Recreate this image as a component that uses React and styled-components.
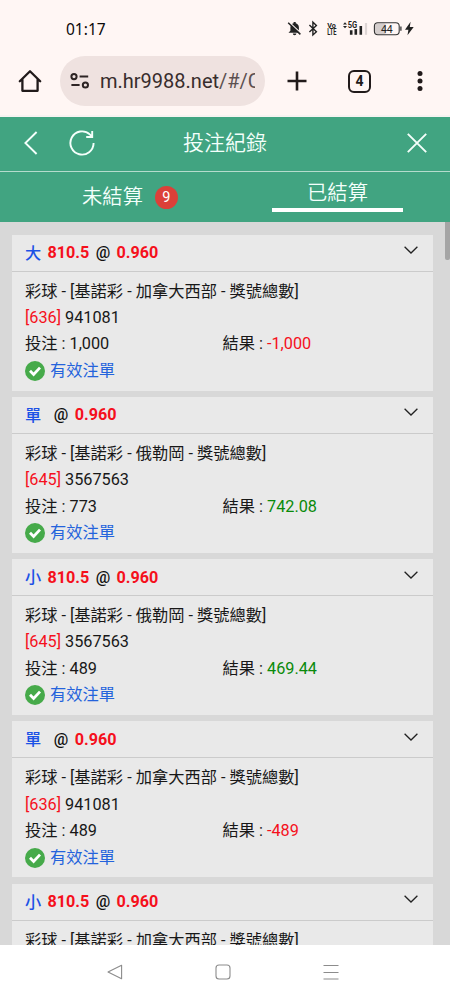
import React, { useState } from 'react';
import styled, { createGlobalStyle } from 'styled-components';

const bets = [
    { id: 1, pick: '大', line: '810.5', odds: '0.960', game: '加拿大西部', code: '636', round: '941081', stake: '1,000', result: '-1,000' },
    { id: 2, pick: '單', line: '', odds: '0.960', game: '俄勒岡', code: '645', round: '3567563', stake: '773', result: '742.08' },
    { id: 3, pick: '小', line: '810.5', odds: '0.960', game: '俄勒岡', code: '645', round: '3567563', stake: '489', result: '469.44' },
    { id: 4, pick: '單', line: '', odds: '0.960', game: '加拿大西部', code: '636', round: '941081', stake: '489', result: '-489' },
    { id: 5, pick: '小', line: '810.5', odds: '0.960', game: '加拿大西部', code: '636', round: '941081', stake: '489', result: '-489' }
];

const StatusBar = () => (
    <StatusRow>
        <Clock>01:17</Clock>
        <StatusIcons viewBox='0 0 128 18'>
            {/* muted bell */}
            <path d='M2.5 12.8h12.2l-1.8-2V7.4c0-2.2-1.4-3.7-3.2-4.1V2H7.6v1.3c-1.9.5-3.2 2-3.2 4.1v3.4zM6.8 13.6h3.6a1.8 1.6 0 0 1-3.6 0z' fill='#222' />
            <path d='M3.2 2.2l12 11.4' stroke='#fff6f4' strokeWidth='1.4' />
            <path d='M2.2 2.8l12.2 11.6' stroke='#222' strokeWidth='1.5' />
            {/* bluetooth */}
            <path d='M23.4 5l7 6.8-3.5 3.2V2.2l3.5 3.2-7 6.6' fill='none' stroke='#222' strokeWidth='1.4' />
            <IconText x='41.3' y='8.4' textLength='8.6' lengthAdjust='spacingAndGlyphs' $size={8}>Vo</IconText>
            <IconText x='41.3' y='15.4' textLength='9.2' lengthAdjust='spacingAndGlyphs' $size={8.4}>LTE</IconText>
            {/* signal */}
            <path d='M57 4.4l2-2.2 2 2.2zM57 6l2 2.2L61 6z' fill='#222' />
            <IconText x='61.8' y='8' textLength='9.4' lengthAdjust='spacingAndGlyphs' $size={8.4}>5G</IconText>
            <path d='M65.2 10.2v4.6M69.8 9v5.8M74.8 6v8.8' stroke='#222' strokeWidth='2.6' />
            <path d='M80 3v11.8' stroke='#ddd5d4' strokeWidth='2.2' />
            {/* battery */}
            <rect x='89' y='3.4' width='11' height='10.8' rx='2' fill='#d5cecd' />
            <rect x='88.4' y='2.7' width='24.8' height='12' rx='3.4' fill='none' stroke='#333' strokeWidth='1.1' />
            <path d='M114.9 6.6v4.2' stroke='#333' strokeWidth='1.3' />
            <BatteryText x='100.8' y='12.6' textAnchor='middle'>44</BatteryText>
            <path d='M124.6 1.8l-5.6 8h3.4l-.9 5.4 6.2-8.2h-3.9z' fill='#222' />
        </StatusIcons>
    </StatusRow>
);

const BrowserBar = () => (
    <BrowserRow>
        <HomeIcon viewBox='0 0 24 24'>
            <path d='M1.8 12.2L12 2.2l10.2 10M4.4 10.6v11.2h15.2V10.6' />
        </HomeIcon>
        <AddressPill>
            <SiteIcon viewBox='0 0 20 16'>
                <circle cx='4' cy='3.6' r='2.6' />
                <path d='M9.6 3.6h8.6M1.4 12h8.2' />
                <circle cx='15.4' cy='12' r='2.6' />
            </SiteIcon>
            <Address>m.hr9988.net<span>/#/Ca</span></Address>
        </AddressPill>
        <PlusIcon viewBox='0 0 20 20'>
            <path d='M10 .5v19M.5 10h19' />
        </PlusIcon>
        <TabCount>4</TabCount>
        <MenuDots viewBox='0 0 6 20'>
            <circle cx='3' cy='2.5' r='2.5' />
            <circle cx='3' cy='10' r='2.5' />
            <circle cx='3' cy='17.5' r='2.5' />
        </MenuDots>
    </BrowserRow>
);

const BetCard = ({ bet }) => {
    const [open, setOpen] = useState(true);

    return (
        <Card>
            <CardHeader onClick={() => setOpen(!open)}>
                <Pick>{bet.pick}</Pick>
                <Odds>{bet.line}</Odds>
                <At>@</At>
                <Odds>{bet.odds}</Odds>
                <Chevron viewBox='0 0 14 8'>
                    <path d='M.6 .8L7 7l6.4-6.2' />
                </Chevron>
            </CardHeader>
            {open && (
                <CardBody>
                    <Line>彩球 - [基諾彩 - {bet.game} - 獎號總數]</Line>
                    <Line><Amount $color='#f5101c'>[{bet.code}]</Amount> {bet.round}</Line>
                    <Split>
                        <Line>投注 : {bet.stake}</Line>
                        <Line>結果 : <Amount $color={bet.result.startsWith('-') ? '#f5101c' : '#0a8a0a'}>{bet.result}</Amount></Line>
                    </Split>
                    <Valid>
                        <Check viewBox='0 0 20 20'>
                            <circle cx='10' cy='10' r='10' fill='#46aa4a' />
                            <path d='M5 9.8l3.6 3.6 6.4-6.8' fill='none' stroke='#fff' strokeWidth='2.8' />
                        </Check>
                        有效注單
                    </Valid>
                </CardBody>
            )}
        </Card>
    );
};

const App = () => {
    const [tab, setTab] = useState('settled');

    return (
        <Phone>
            <GlobalStyle />
            <StatusBar />
            <BrowserBar />
            <TitleBar>
                <TitleIcon $width={14} $height={24} $left={24} viewBox='0 0 14 24'>
                    <path d='M12.6 1L1.4 12l11.2 11' />
                </TitleIcon>
                <TitleIcon $width={26} $height={26} $left={31} viewBox='0 0 26 26'>
                    <path d='M24.6 13A11.6 11.6 0 1 1 20.8 4.4L23 6.6M23.2 1v6h-6' />
                </TitleIcon>
                <Title>投注紀錄</Title>
                <TitleIcon $width={20} $height={20} $left={140} viewBox='0 0 20 20'>
                    <path d='M.8 .8l18.4 18.4M19.2 .8L.8 19.2' />
                </TitleIcon>
            </TitleBar>
            <Tabs>
                <Tab onClick={() => setTab('open')}>
                    <TabLabel $active={tab === 'open'}>未結算</TabLabel>
                    <Badge>9</Badge>
                </Tab>
                <Tab onClick={() => setTab('settled')}>
                    <TabLabel $active={tab === 'settled'}>已結算</TabLabel>
                </Tab>
            </Tabs>
            <Content>
                <List>
                    {bets.map(bet => <BetCard key={bet.id} bet={bet} />)}
                </List>
                <ScrollThumb />
            </Content>
            <NavBar>
                <NavIcon viewBox='0 0 16 16'><path d='M14.6 1.2v13.6L1 8z' /></NavIcon>
                <NavIcon viewBox='0 0 16 16'><rect x='1' y='1' width='14' height='14' rx='3' /></NavIcon>
                <NavIcon viewBox='0 0 16 16'><path d='M.5 1.5h15M.5 8.5h15M.5 15h15' /></NavIcon>
            </NavBar>
        </Phone>
    );
};

export default App;

const GlobalStyle = createGlobalStyle`
    * {
        box-sizing: border-box;
    }
    body {
        margin: 0;
        font-family: Roboto, 'Noto Sans CJK TC', sans-serif;
    }
    svg {
        display: block;
        flex-shrink: 0;
    }
`;

const Phone = styled.div`
    width: 450px;
    height: 1000px;
    display: flex;
    flex-direction: column;
    overflow: hidden;
    background: #fff6f4;
`;

const StatusRow = styled.div`
    height: 56px;
    display: flex;
    align-items: center;
    justify-content: space-between;
    padding: 2px 36px 0 66px;
    flex-shrink: 0;
`;

const Clock = styled.span`
    font-family: 'Noto Sans', sans-serif;
    font-size: 15.5px;
    color: #0c0a0a;
`;

const StatusIcons = styled.svg`
    width: 128px;
    height: 18px;
`;

const IconText = styled.text`
    font-family: Roboto, sans-serif;
    font-weight: 700;
    font-size: ${pr => pr.$size}px;
    fill: #222;
`;

const BatteryText = styled.text`
    font-family: Roboto, sans-serif;
    font-size: 10.5px;
    fill: #222;
`;

const BrowserRow = styled.div`
    height: 61px;
    display: flex;
    align-items: center;
    padding: 0 27px 9px 18px;
    border-bottom: 2px solid #f6f3f1;
    flex-shrink: 0;
`;

const HomeIcon = styled.svg`
    width: 24px;
    height: 24px;
    fill: none;
    stroke: #211a1a;
    stroke-width: 2.3;
    stroke-linejoin: round;
    stroke-linecap: round;
`;

const AddressPill = styled.div`
    width: 205px;
    height: 50px;
    display: flex;
    align-items: center;
    margin-left: 18px;
    padding: 0 10px;
    border-radius: 25px;
    background: #efe2e0;
`;

const SiteIcon = styled.svg`
    width: 20px;
    height: 16px;
    fill: none;
    stroke: #2d2424;
    stroke-width: 2;
`;

const Address = styled.div`
    width: 155px;
    margin-left: 10px;
    overflow: hidden;
    white-space: nowrap;
    font-size: 20px;
    color: #382d2d;
    span {
        color: #5c5050;
    }
`;

const PlusIcon = styled.svg`
    width: 20px;
    height: 20px;
    margin-left: 22px;
    fill: none;
    stroke: #211a1a;
    stroke-width: 2.6;
`;

const TabCount = styled.div`
    width: 23px;
    height: 23px;
    display: flex;
    align-items: center;
    justify-content: center;
    margin-left: 41px;
    border: 2.4px solid #211a1a;
    border-radius: 6px;
    font-size: 14px;
    font-weight: 700;
    color: #211a1a;
`;

const MenuDots = styled.svg`
    width: 6px;
    height: 20px;
    margin-left: auto;
    fill: #211a1a;
`;

const TitleBar = styled.div`
    height: 55px;
    display: flex;
    align-items: center;
    padding-bottom: 2px;
    background: #41a481;
    border-bottom: 1px solid #b5dccd;
    flex-shrink: 0;
`;

const TitleIcon = styled.svg`
    width: ${pr => pr.$width}px;
    height: ${pr => pr.$height}px;
    margin-left: ${pr => pr.$left}px;
    fill: none;
    stroke: #f4fffb;
    stroke-width: 1.9;
`;

const Title = styled.h1`
    width: 84px;
    margin: 0 0 0 88px;
    font-size: 21px;
    font-weight: 350;
    line-height: 30px;
    color: #f4fffb;
    white-space: nowrap;
`;

const Tabs = styled.div`
    height: 50px;
    display: grid;
    grid-template-columns: 1fr 1fr;
    background: #41a481;
    flex-shrink: 0;
`;

const Tab = styled.div`
    display: flex;
    justify-content: center;
    align-items: center;
    &:first-child {
        padding-left: 35px;
    }
    &:last-child {
        padding-bottom: 3px;
    }
`;

const TabLabel = styled.span`
    width: ${pr => pr.$active ? '131px' : 'auto'};
    text-align: center;
    font-size: 20.3px;
    font-weight: 350;
    line-height: 29px;
    color: #f4fffb;
    border-bottom: ${pr => pr.$active ? '4px solid #fff' : 'none'};
`;

const Badge = styled.span`
    width: 23px;
    height: 23px;
    margin-left: 12px;
    border-radius: 50%;
    background: #dc4039;
    text-align: center;
    font-size: 14.5px;
    line-height: 23px;
    color: #fff;
`;

const Content = styled.div`
    flex: 1;
    min-height: 0;
    display: flex;
    justify-content: space-between;
    overflow: hidden;
    background: #d8d8d8;
`;

const List = styled.div`
    width: 433px;
    padding: 12.5px 0 0 12px;
`;

const Card = styled.div`
    margin-bottom: 6.3px;
    background: #e9e9e9;
`;

const CardHeader = styled.div`
    height: 37px;
    display: flex;
    align-items: center;
    gap: 6.4px;
    padding: 0 15.5px 0 13px;
    border-bottom: 1px solid #cbcbcb;
    font-size: 16.2px;
    font-weight: 700;
`;

const Pick = styled.span`
    width: 16px;
    margin-bottom: 2px;
    font-weight: 500;
    color: #1c52e6;
`;

const Odds = styled.span`
    color: #f5101c;
`;

const At = styled.span`
    font-weight: 500;
    color: #111;
`;

const Chevron = styled.svg`
    width: 14px;
    height: 8px;
    margin: 0 0 5px auto;
    fill: none;
    stroke: #222;
    stroke-width: 1.3;
`;

const CardBody = styled.div`
    height: 119px;
    padding: 7px 13px 5px;
`;

const Line = styled.div`
    height: 26.4px;
    line-height: 26.4px;
    font-size: 16.25px;
    color: #181818;
    white-space: nowrap;
`;

const Split = styled.div`
    display: grid;
    grid-template-columns: 1fr 1fr;
`;

const Amount = styled.span`
    color: ${pr => pr.$color};
`;

const Valid = styled(Line)`
    display: flex;
    align-items: center;
    gap: 5px;
    color: #2463dc;
`;

const Check = styled.svg`
    width: 20px;
    height: 20px;
`;

const ScrollThumb = styled.div`
    width: 5px;
    height: 38px;
    border-radius: 0 0 2px 2px;
    background: #a5a5a5;
`;

const NavBar = styled.div`
    height: 55px;
    display: flex;
    align-items: center;
    justify-content: center;
    gap: 92px;
    padding: 0 4px 1px 0;
    background: #fff;
    flex-shrink: 0;
`;

const NavIcon = styled.svg`
    width: 16px;
    height: 16px;
    fill: none;
    stroke: #8c8c8c;
    stroke-width: 1.1;
    stroke-linejoin: round;
`;
